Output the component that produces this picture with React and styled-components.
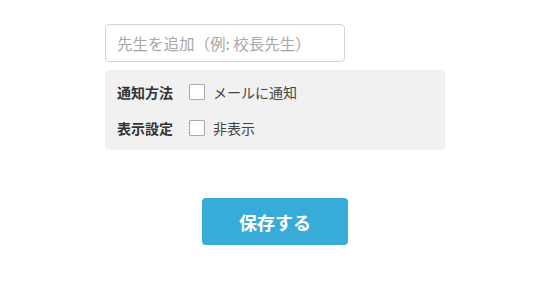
import React from 'react';
import styled, { createGlobalStyle } from 'styled-components';

const GlobalStyle = createGlobalStyle`
  html, body {
    margin: 0;
    padding: 0;
    background: #ffffff;
    font-family: "Noto Sans CJK JP", "Noto Sans", sans-serif;
  }
`;

const Page = styled.div`
  padding: 24px 0 0 105px;
`;

const Form = styled.div`
  width: 340px;
  display: flex;
  flex-direction: column;
`;

const TextInput = styled.input`
  box-sizing: border-box;
  width: 240px;
  height: 38px;
  padding: 0 11px;
  border: 1px solid #d4d4d4;
  border-radius: 4px;
  font-family: inherit;
  font-size: 15.5px;
  color: #333;
  outline: none;

  &::placeholder {
    color: #a8a8a8;
  }
`;

const OptionsBox = styled.div`
  margin-top: 8px;
  box-sizing: border-box;
  background: #f1f1f1;
  border-radius: 4px;
  padding: 4px 12px;
  display: flex;
  flex-direction: column;
`;

const OptionRow = styled.label`
  display: flex;
  align-items: center;
  height: 36px;
  cursor: pointer;
`;

const OptionLabel = styled.span`
  width: 72px;
  font-size: 14px;
  font-weight: 700;
  color: #333;
`;

const Check = styled.input.attrs({ type: 'checkbox' })`
  appearance: none;
  margin: 0 8px 0 0;
  width: 16px;
  height: 16px;
  box-sizing: border-box;
  border: 1px solid #a9a9a9;
  border-radius: 1px;
  background: #fff;
`;

const OptionText = styled.span`
  font-size: 14px;
  color: #444;
`;

const Actions = styled.div`
  display: flex;
  justify-content: center;
  margin-top: 48px;
`;

const SaveButton = styled.button`
  width: 146px;
  height: 47px;
  border: none;
  border-radius: 4px;
  background: #38acd8;
  color: #fff;
  font-family: inherit;
  font-size: 18px;
  font-weight: 700;
  cursor: pointer;
`;

const options = [
  { label: '通知方法', text: 'メールに通知' },
  { label: '表示設定', text: '非表示' },
];

export default function App() {
  return (
    <>
      <GlobalStyle />
      <Page>
        <Form>
          <TextInput placeholder="先生を追加（例: 校長先生）" />
          <OptionsBox>
            {options.map(o => (
              <OptionRow key={o.label}>
                <OptionLabel>{o.label}</OptionLabel>
                <Check />
                <OptionText>{o.text}</OptionText>
              </OptionRow>
            ))}
          </OptionsBox>
          <Actions>
            <SaveButton>保存する</SaveButton>
          </Actions>
        </Form>
      </Page>
    </>
  );
}
